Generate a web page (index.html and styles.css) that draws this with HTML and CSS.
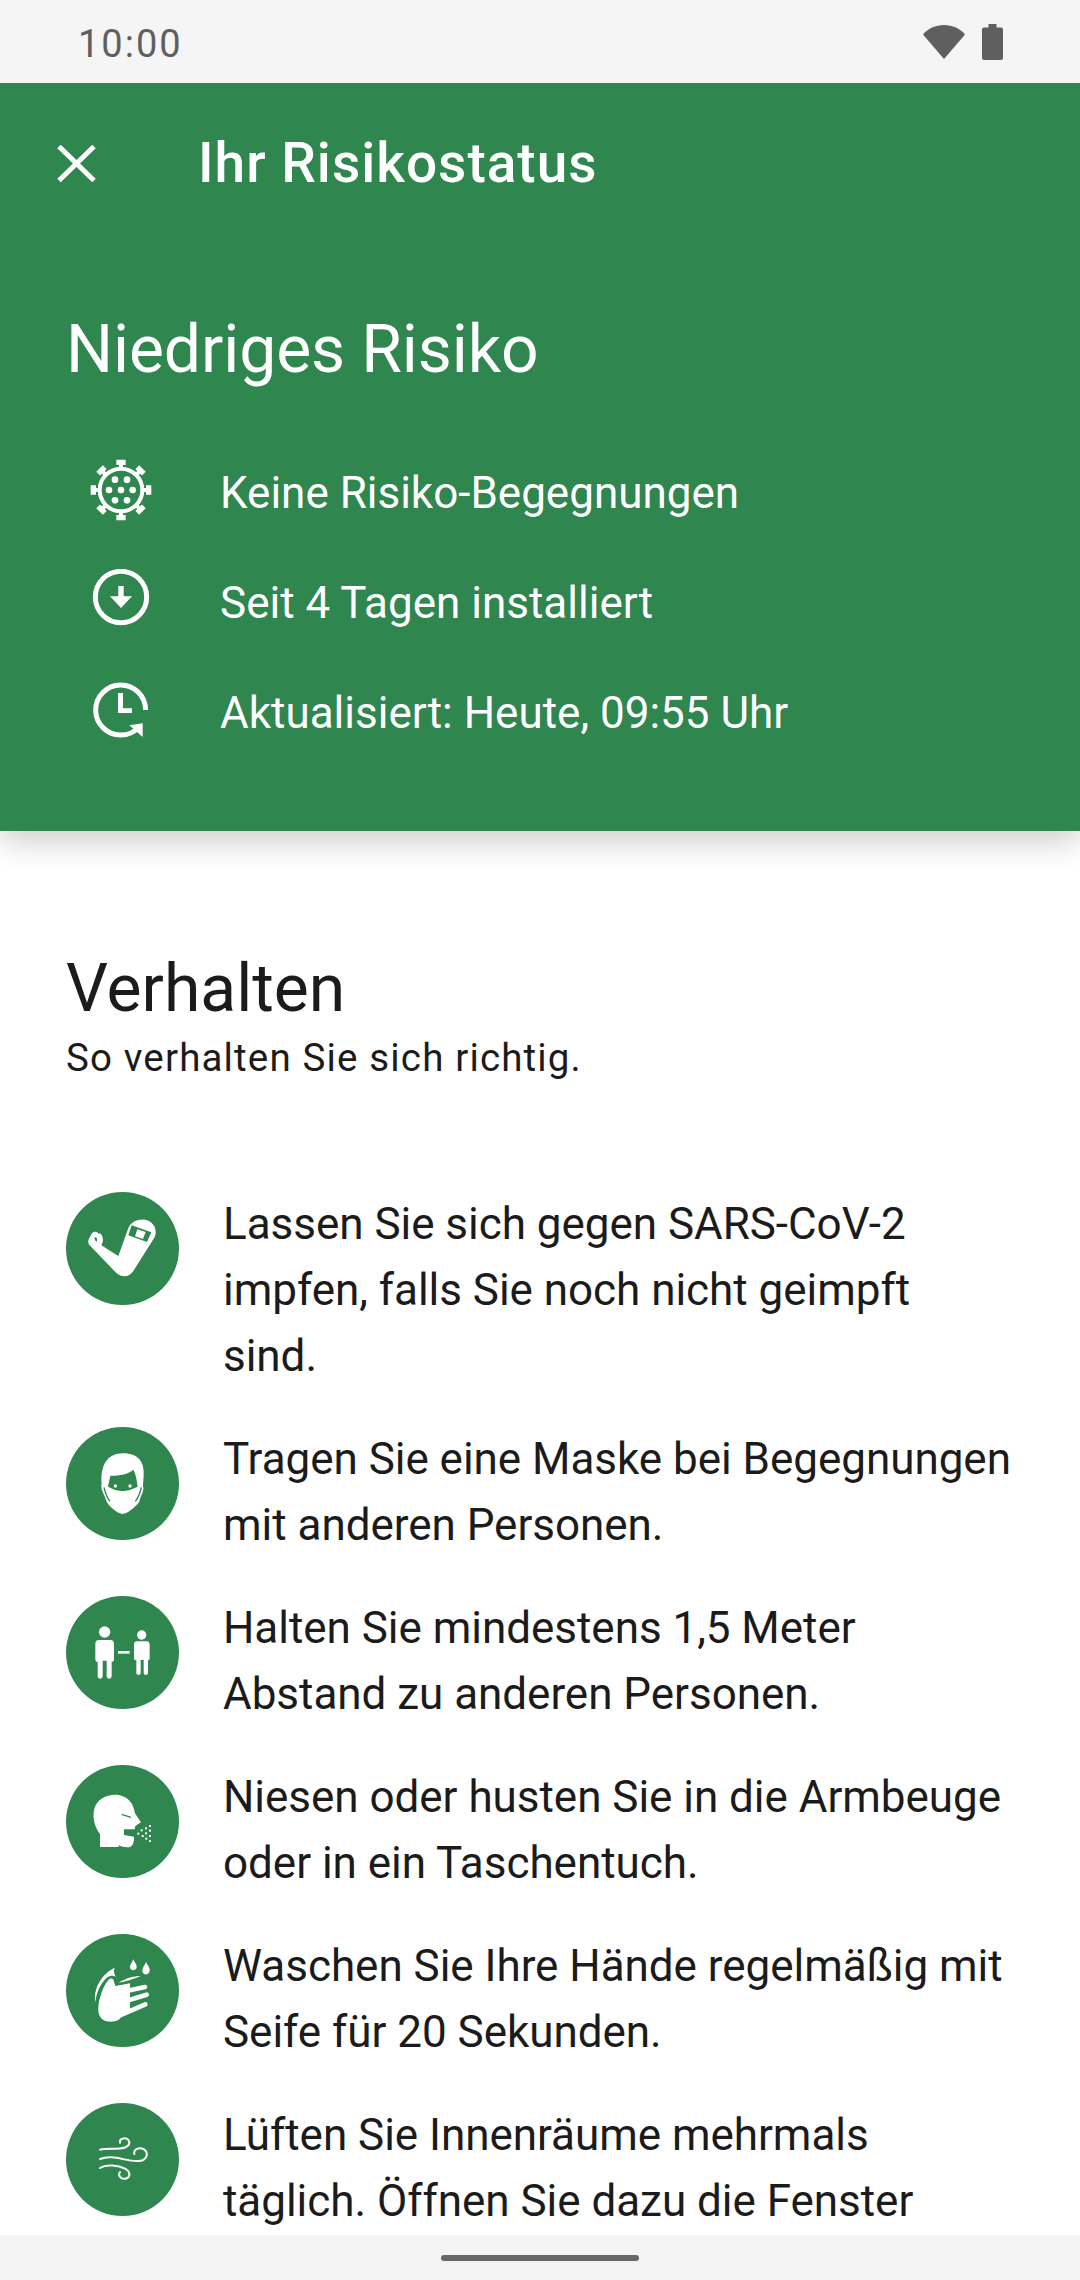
FILE: index.html
```html
<!DOCTYPE html>
<html lang="de">

<head>
    <title>Ihr Risikostatus</title>
    <link rel="stylesheet" href="styles.css">
</head>

<body>
    <div class="status-bar">
        <span class="clock">10:00</span>
        <div class="status-icons">
            <svg class="wifi-icon" viewBox="0 0 42 34"><path d="M21 34 0 9.500C5 3.500 12.500 0 21 0s16 3.500 21 9.500Z"/></svg>
            <svg class="battery-icon" viewBox="0 0 21 36"><path d="M6.500 0h8v3.500H19a2 2 0 0 1 2 2V34a2 2 0 0 1-2 2H2a2 2 0 0 1-2-2V5.500a2 2 0 0 1 2-2h4.500Z"/></svg>
        </div>
    </div>

    <header class="risk-header">
        <div class="toolbar">
            <svg class="close-icon" viewBox="0 0 39 37"><path d="M2 1.500 37 35.500M37 1.500 2 35.500"/></svg>
            <h1 class="toolbar-title">Ihr Risikostatus</h1>
        </div>
        <h2 class="risk-title">Niedriges Risiko</h2>
        <div class="risk-row">
            <svg class="risk-icon" viewBox="90 57 186 186">
                <circle class="line thin" cx="183" cy="150" r="64"/>
                <g class="fill">
                    <circle cx="165" cy="119" r="10"/><circle cx="201" cy="119" r="10"/>
                    <circle cx="147" cy="150" r="10"/><circle cx="183" cy="150" r="10"/><circle cx="218" cy="150" r="10"/>
                    <circle cx="165" cy="181" r="10"/><circle cx="201" cy="181" r="10"/>
                    <path d="M169 59h28v16h-8v10h-12V75h-8Z"/>
                    <path d="M169 59h28v16h-8v10h-12V75h-8Z" transform="rotate(45 183 150)"/>
                    <path d="M169 59h28v16h-8v10h-12V75h-8Z" transform="rotate(90 183 150)"/>
                    <path d="M169 59h28v16h-8v10h-12V75h-8Z" transform="rotate(135 183 150)"/>
                    <path d="M169 59h28v16h-8v10h-12V75h-8Z" transform="rotate(180 183 150)"/>
                    <path d="M169 59h28v16h-8v10h-12V75h-8Z" transform="rotate(225 183 150)"/>
                    <path d="M169 59h28v16h-8v10h-12V75h-8Z" transform="rotate(270 183 150)"/>
                    <path d="M169 59h28v16h-8v10h-12V75h-8Z" transform="rotate(315 183 150)"/>
                </g>
            </svg>
            <span>Keine Risiko-Begegnungen</span>
        </div>
        <div class="risk-row">
            <svg class="risk-icon" viewBox="90 387 186 186">
                <circle class="line" cx="183" cy="471" r="77"/>
                <path class="fill" d="M175 438h16v31h25l-33 35-33-35h25Z"/>
            </svg>
            <span>Seit 4 Tagen installiert</span>
        </div>
        <div class="risk-row">
            <svg class="risk-icon" viewBox="90 717 186 186">
                <path class="line" d="M257 810A75 75 0 1 0 183 885C205 885 222 877 236 862"/>
                <path class="fill" d="M248 891V850L208 856Z"/>
                <path class="fill" d="M174 759h15v46h27v14h-42Z"/>
            </svg>
            <span>Aktualisiert: Heute, 09:55 Uhr</span>
        </div>
    </header>

    <main class="content">
        <h2 class="section-title">Verhalten</h2>
        <p class="section-sub">So verhalten Sie sich richtig.</p>

        <div class="tips">
            <div class="tip">
                <svg class="tip-icon" viewBox="48 66 339 339">
                    <path class="white" d="M116 208 126 190C135 182 143 186 146 192 153 186 161 202 158 216L154 226 205 258 236 172C246 152 272 143 295 152 316 162 323 186 312 205L250 303C238 322 216 323 200 310L119 226C114 220 114 214 116 208Z"/>
                    <path class="hole" d="M135 202C140 200 143 208 140 215 134 212 132 206 135 202Z"/>
                    <path class="hole" d="M245 166 304 187 291 216 235 196Z"/>
                    <path class="white" d="M262 178 287 186 279 207 255 199Z"/>
                </svg>
                <p>Lassen Sie sich gegen SARS-CoV-2 impfen, falls Sie noch nicht geimpft sind.</p>
            </div>
            <div class="tip">
                <svg class="tip-icon" viewBox="48 771 339 339">
                    <path class="white" d="M155 940C152 905 160 862 200 852 215 848 235 849 250 855 272 864 283 885 281 915L279 948C284 962 274 970 268 995 255 1012 233 1030 218 1032 203 1030 180 1012 170 995 162 970 150 958 155 940Z"/>
                    <path class="hole" d="M174 950 181 917C200 918 235 914 250 899 257 912 260 927 263 950L240 960 218 964 195 960Z"/>
                    <circle class="white" cx="196" cy="948" r="5"/>
                    <circle class="white" cx="240" cy="948" r="5"/>
                    <path class="hole-line" d="M162 952C166 970 171 983 180 994M274 952C270 970 265 983 256 994"/>
                </svg>
                <p>Tragen Sie eine Maske bei Begegnungen mit anderen Personen.</p>
            </div>
            <div class="tip">
                <svg class="tip-icon" viewBox="48 78 339 339">
                    <circle class="white" cx="164" cy="186" r="17"/>
                    <path class="white" d="M146 210H182C188 210 192 215 192 221V268C192 276 185 278 185 272V318C185 329 170 329 170 318V272H158V318C158 329 143 329 143 318V274C143 278 136 276 136 268V221C136 215 140 210 146 210Z"/>
                    <rect class="white" x="204" y="243" width="35" height="8"/>
                    <circle class="white" cx="275" cy="195" r="14"/>
                    <path class="white" d="M261 214H290C295 214 299 218 299 223V264C299 272 294 272 294 268V308C294 317 281 317 281 308V270H272V308C272 317 259 317 259 308V268C259 272 252 272 252 264V223C252 218 256 214 261 214Z"/>
                </svg>
                <p>Halten Sie mindestens 1,5 Meter Abstand zu anderen Personen.</p>
            </div>
            <div class="tip">
                <svg class="tip-icon" viewBox="48 585 339 339">
                    <path class="white" d="M150 831V792C135 772 126 745 133 716 141 686 175 671 206 675 235 680 251 702 255 730L273 757 256 768 254 778H222V795L252 800C252 815 250 826 240 831 228 834 215 830 206 826V831Z"/>
                    <path class="hole-line" d="M215 733 243 742"/>
                    <g class="white">
                        <rect x="297" y="765" width="6" height="6"/><rect x="285" y="772" width="6" height="6"/>
                        <rect x="272" y="778" width="6" height="6"/><rect x="297" y="779" width="6" height="6"/>
                        <rect x="262" y="788" width="6" height="6"/><rect x="285" y="787" width="6" height="6"/>
                        <rect x="275" y="795" width="6" height="6"/><rect x="297" y="795" width="6" height="6"/>
                        <rect x="286" y="803" width="6" height="6"/><rect x="297" y="810" width="6" height="6"/>
                    </g>
                </svg>
                <p>Niesen oder husten Sie in die Armbeuge oder in ein Taschentuch.</p>
            </div>
            <div class="tip">
                <svg class="tip-icon" viewBox="48 102 339 339">
                    <path class="white" d="M250 178C254 188 261 194 260 202 258 214 241 214 240 202 240 194 246 188 250 178Z"/>
                    <path class="white" d="M288 186C293 197 300 203 299 212 297 227 278 227 277 212 277 203 284 197 288 186Z"/>
                    <path class="white" d="M136 306C130 270 150 225 194 203 190 212 192 222 198 230 190 226 180 226 172 232 152 250 140 275 136 306Z"/>
                    <path class="white" d="M205 248C225 236 250 228 272 228 255 236 232 244 205 248Z"/>
                    <path class="white" d="M145 325C146 300 155 265 175 240 180 232 192 234 192 245L196 258 240 250V328L205 360C190 368 165 366 155 356 147 348 144 338 145 325Z"/>
                    <path class="white-fat" d="M215 276 285 261M225 304 290 284M215 344 286 313"/>
                </svg>
                <p>Waschen Sie Ihre Hände regelmäßig mit Seife für 20 Sekunden.</p>
            </div>
            <div class="tip">
                <svg class="tip-icon" viewBox="48 609 339 339">
                    <path class="white-line" d="M150 749C170 745 195 748 215 745 235 742 243 730 235 720 226 710 207 716 210 728"/>
                    <path class="white-line" d="M150 777C190 762 225 785 265 783 290 782 298 760 282 748 268 740 250 748 253 762"/>
                    <path class="white-line" d="M150 804C170 792 205 796 225 806 243 816 242 832 226 836 212 838 202 826 210 816"/>
                </svg>
                <p>Lüften Sie Innenräume mehrmals täglich. Öffnen Sie dazu die Fenster</p>
            </div>
        </div>
    </main>

    <div class="nav-bar"><div class="nav-handle"></div></div>
</body>

</html>
```

FILE: styles.css
```css
* {
    box-sizing: border-box;
}

body {
    margin: 0;
    height: 2280px;
    overflow: hidden;
    display: flex;
    flex-direction: column;
    background-color: #ffffff;
    font-family: Roboto, sans-serif;
    color: #1b1b1b;
}

h1, h2, p {
    margin: 0;
    font-weight: 400;
}

.status-bar {
    position: relative;
    z-index: 2;
    flex: none;
    height: 83px;
    display: flex;
    justify-content: space-between;
    align-items: center;
    padding: 0 77px 0 78px;
    background-color: #f5f5f5;
    color: #5f5f5f;
}

.clock {
    font-size: 38px;
    letter-spacing: 2px;
    margin-top: 5px;
}

.status-icons {
    display: flex;
    align-items: center;
    gap: 17px;
}

.status-icons svg {
    fill: #5f5f5f;
    display: block;
}

.wifi-icon {
    width: 42px;
    height: 34px;
}

.battery-icon {
    width: 21px;
    height: 36px;
}

.risk-header {
    position: relative;
    z-index: 1;
    flex: none;
    height: 748px;
    background-color: #2f864e;
    color: #ffffff;
    box-shadow: 0 10px 30px rgba(0, 0, 0, 0.2);
}

.toolbar {
    height: 160px;
    display: flex;
    align-items: center;
    padding-left: 57px;
}

.close-icon {
    width: 39px;
    height: 37px;
    margin-right: 102px;
    fill: none;
    stroke: #ffffff;
    stroke-width: 5;
}

.toolbar-title {
    font-size: 55px;
    font-weight: 500;
    letter-spacing: 1px;
}

.risk-title {
    font-size: 66px;
    line-height: 88px;
    letter-spacing: -0.1px;
    margin: 63px 0 44px 66px;
}

.risk-row {
    height: 110px;
    display: flex;
    align-items: center;
    padding-left: 90px;
    font-size: 44px;
}

.risk-icon {
    width: 62px;
    height: 62px;
    margin-right: 68px;
    margin-bottom: 6px;
    flex: none;
}

.risk-icon .line {
    fill: none;
    stroke: #ffffff;
    stroke-width: 15;
}

.risk-icon .thin {
    stroke-width: 12;
}

.risk-icon .fill {
    fill: #ffffff;
}

.content {
    flex: 1;
    min-height: 0;
    overflow: hidden;
    padding: 118px 66px 0;
}

.section-title {
    font-size: 66px;
    line-height: 80px;
}

.section-sub {
    font-size: 38.500px;
    line-height: 50px;
    letter-spacing: 1.15px;
    margin-top: 4px;
    margin-bottom: 108px;
}

.tips {
    display: flex;
    flex-direction: column;
    gap: 37px;
}

.tip {
    display: flex;
    align-items: flex-start;
    gap: 44px;
    font-size: 44px;
    line-height: 66px;
    letter-spacing: -0.03px;
}

.tip p {
    width: 800px;
}

.tip-icon {
    flex: none;
    width: 113px;
    height: 113px;
    margin-top: 1px;
    border-radius: 50%;
    background-color: #2f864e;
}

.tip-icon .white,
.tip-icon .white rect {
    fill: #ffffff;
}

.tip-icon .hole {
    fill: #2f864e;
}

.tip-icon .hole-line {
    fill: none;
    stroke: #2f864e;
    stroke-width: 4;
}

.tip-icon .white-line {
    fill: none;
    stroke: #ffffff;
    stroke-width: 6;
    stroke-linecap: round;
}

.tip-icon .white-fat {
    fill: none;
    stroke: #ffffff;
    stroke-width: 14;
    stroke-linecap: round;
}

.nav-bar {
    flex: none;
    height: 45px;
    display: flex;
    justify-content: center;
    align-items: center;
    background-color: #f3f3f3;
}

.nav-handle {
    width: 198px;
    height: 6px;
    border-radius: 3px;
    background-color: #666666;
}
```
